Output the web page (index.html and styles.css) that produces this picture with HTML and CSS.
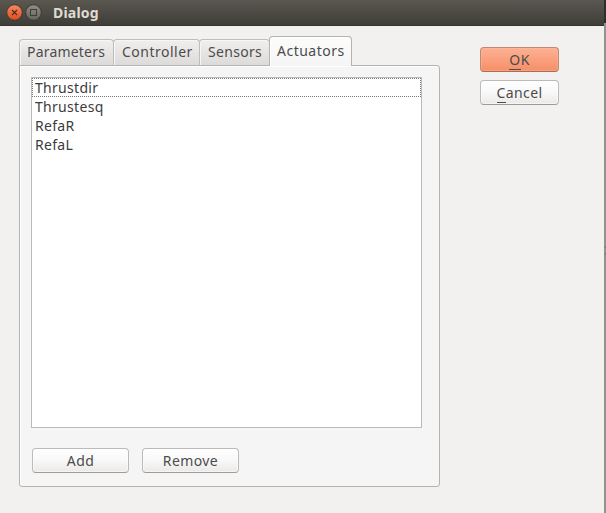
FILE: index.html
```html
<!DOCTYPE html>
<html lang="en">
<head>
<meta charset="utf-8">
<title>Dialog</title>
<link rel="stylesheet" href="styles.css">
</head>
<body>
<div class="screen">
  <div class="window">
    <header class="titlebar">
      <svg class="controls" width="38" height="20" viewBox="0 0 38 20">
        <defs>
          <linearGradient id="close" x1="0" y1="0" x2="0" y2="1"><stop offset="0" stop-color="#f58b65"/><stop offset="1" stop-color="#de4b1f"/></linearGradient>
          <linearGradient id="max" x1="0" y1="0" x2="0" y2="1"><stop offset="0" stop-color="#918e85"/><stop offset="1" stop-color="#66645d"/></linearGradient>
        </defs>
        <circle cx="9.5" cy="9.5" r="7.8" fill="url(#close)" stroke="#3a3934"/>
        <path d="M7 7l5 5M12 7l-5 5" stroke="#51291b" stroke-width="1.1"/>
        <circle cx="28.5" cy="9.5" r="7.8" fill="url(#max)" stroke="#3a3934"/>
        <rect x="25.5" y="6.5" width="6" height="6" fill="none" stroke="#3d3c37"/>
      </svg>
      <h1 class="title">Dialog</h1>
    </header>
    <main class="content">
      <section class="tabs">
        <nav class="tabbar">
          <div class="tab tab-parameters"><span>Parameters</span></div>
          <div class="tab tab-controller"><span>Controller</span></div>
          <div class="tab tab-sensors"><span>Sensors</span></div>
          <div class="tab tab-active"><span>Actuators</span></div>
        </nav>
        <div class="panel">
          <ul class="list">
            <li class="focused">Thrustdir</li>
            <li>Thrustesq</li>
            <li>RefaR</li>
            <li>RefaL</li>
          </ul>
          <div class="actions">
            <button class="button">Add</button>
            <button class="button">Remove</button>
          </div>
        </div>
      </section>
      <aside class="confirm">
        <button class="button primary"><span class="key">O</span>K</button>
        <button class="button"><span class="key">C</span>ancel</button>
      </aside>
    </main>
  </div>
  <div class="edge"><svg width="2" height="12" viewBox="0 0 2 12"><path d="M0 1l2 2M2 8l-2 2" stroke="#777"/></svg></div>
</div>
</body>
</html>
```
FILE: styles.css
```css
* { box-sizing: border-box; }
body {
  margin: 0;
  background: #f2f1f0;
  color: #4c4c4c;
  font: 14px/19px "Noto Sans", "Open Sans", sans-serif;
  letter-spacing: 0.2px;
}
.screen { display: flex; width: 606px; height: 513px; overflow: hidden; }
.window { width: 604px; background: #f2f1ef; }
.edge {
  width: 2px;
  padding-top: 245px;
  background: linear-gradient(#2e2d29 23px, #929292 23px);
}
.edge svg { display: block; }
.titlebar {
  display: flex;
  height: 26px;
  padding: 3px 0 0 5px;
  background: linear-gradient(#5b5850, #3e3d38 25px, #34332f 25px);
}
.title {
  margin: 0 0 0 10px;
  color: #dfdbd2;
  font-size: 14px;
  line-height: 20px;
  font-weight: 700;
}
.content { display: flex; gap: 40px; padding: 10px 0 0 19px; }
.tabs { width: 421px; }
.tabbar { display: flex; align-items: flex-end; height: 30px; }
.tab {
  height: 27px;
  margin-right: -1px;
  padding: 2px 0 0 8px;
  border: 1px solid #c0bdb9;
  border-bottom-color: #b6b3ae;
  border-radius: 4px 4px 0 0;
  background: linear-gradient(#f0efee, #dddbd9);
  box-shadow: inset 1px 1px #f7f6f6;
  white-space: nowrap;
}
.tab-parameters { width: 95px; padding-left: 7px; }
.tab-controller { width: 87px; letter-spacing: 0.5px; }
.tab-sensors { width: 71px; letter-spacing: 0.3px; }
.tab-active {
  width: 83px;
  height: 30px;
  padding: 4px 0 0 7px;
  border-color: #b6b3ae;
  border-bottom: 0;
  background: linear-gradient(#fcfcfc, #f5f5f5);
  box-shadow: inset 1px 1px #fff;
  letter-spacing: 0.5px;
  z-index: 1;
}
.panel {
  height: 422px;
  margin-top: -1px;
  padding: 11px;
  border: 1px solid #b6b3ae;
  border-radius: 0 3px 3px 3px;
  background: #f5f5f5;
  box-shadow: inset 1px 1px #fff;
}
.list {
  width: 391px;
  height: 351px;
  margin: 0;
  padding: 0;
  border: 1px solid #bababa;
  background: #fff;
  color: #3c3c3c;
  letter-spacing: 0.3px;
  list-style: none;
}
.list li { height: 19px; padding-left: 3px; line-height: 19px; }
.list .focused { outline: 1px dotted #777; outline-offset: -1px; }
.actions { display: flex; gap: 13px; padding: 20px 0 0 1px; }
.button {
  width: 97px;
  height: 25px;
  padding: 0 0 1px;
  border: 1px solid #bebbb7;
  border-bottom-color: #9f9c98;
  border-radius: 4px;
  background: linear-gradient(#fff, #f8f8f8 50%, #ebe9e8);
  box-shadow: inset 0 0 0 1px #ffffff80;
  color: #4c4c4c;
  font: inherit;
  letter-spacing: 0.4px;
}
.confirm { display: flex; flex-direction: column; gap: 8px; padding-top: 11px; }
.confirm .button { width: 79px; }
.button.primary {
  border-color: #bd8974;
  border-bottom-color: #a76d57;
  background: linear-gradient(#fdb193, #f68f68);
  box-shadow: inset 0 0 0 1px #ffbca160;
}
.key { box-shadow: 0 1px #4c4c4c; }
```
